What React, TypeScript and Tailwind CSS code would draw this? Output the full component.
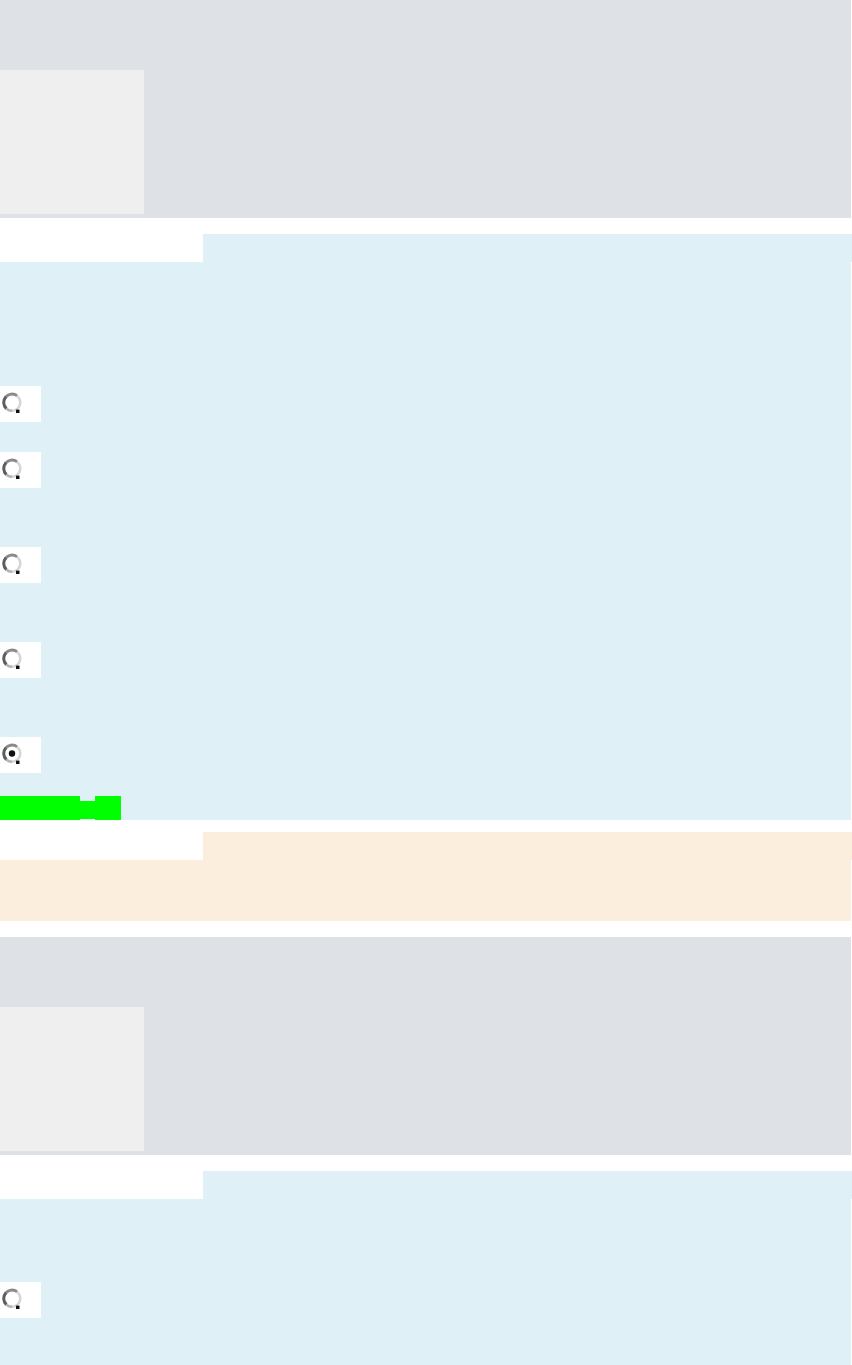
import React from "react";

function Radio({ checked = false }: { checked?: boolean }) {
  return (
    <div className="h-[36px] w-[41px] bg-white pl-[2px] pt-[6px]">
      <svg width="20" height="21" viewBox="0 0 20 21">
        <circle cx="10" cy="10.5" r="8.3" fill="#fff" stroke="#d6d6d6" strokeWidth="2.6" />
        <path d="M15 3.6 A8.3 8.3 0 0 0 3.4 5.4" fill="none" stroke="#8a8a8a" strokeWidth="2.8" />
        <path d="M4 4.8 A8.3 8.3 0 0 0 4.4 16.6" fill="none" stroke="#5e5e5e" strokeWidth="3" />
        <path d="M4.4 16.6 A8.3 8.3 0 0 0 10 18.8" fill="none" stroke="#b4b4b4" strokeWidth="2.6" />
        <rect x="14" y="17.6" width="3.5" height="3.4" fill="#111" />
        {checked && <circle cx="10" cy="10.5" r="3.2" fill="#111" />}
      </svg>
    </div>
  );
}

function TopBlock() {
  return (
    <div className="h-[218px] w-[851px] bg-[#dee1e6] pt-[70px]">
      <div className="h-[144px] w-[144px] bg-[#efefef]" />
    </div>
  );
}

function LabelRow({ fill }: { fill: string }) {
  return (
    <div className="flex h-[28px] w-[852px]">
      <div className="h-full w-[203px] bg-white" />
      <div className={`h-full flex-1 ${fill}`} />
    </div>
  );
}

export default function App() {
  return (
    <div className="flex min-h-[1365px] w-[852px] flex-col overflow-hidden bg-white font-['Liberation_Sans',sans-serif]">
      <TopBlock />

      <section className="mt-[16px] w-[851px] bg-[#dff0f7]">
        <LabelRow fill="bg-[#dff0f7]" />
        <div className="flex flex-col">
          <div className="mt-[124px]">
            <Radio />
          </div>
          <div className="mt-[30px]">
            <Radio />
          </div>
          <div className="mt-[59px]">
            <Radio />
          </div>
          <div className="mt-[59px]">
            <Radio />
          </div>
          <div className="mt-[59px]">
            <Radio checked />
          </div>
          <div className="mt-[23px] flex h-[24px] items-start">
            <div className="h-[24px] w-[80px] bg-[#00ff00]" />
            <div className="mt-[5px] h-[18px] w-[15px] bg-[#00ff00]" />
            <div className="h-[24px] w-[26px] bg-[#00ff00]" />
          </div>
        </div>
      </section>

      <section className="mt-[12px] h-[89px] w-[851px] bg-[#fbeedc]">
        <LabelRow fill="bg-[#fbeedc]" />
      </section>

      <div className="mt-[16px]">
        <TopBlock />
      </div>

      <section className="mt-[16px] h-[220px] w-[851px] bg-[#dff0f7]">
        <LabelRow fill="bg-[#dff0f7]" />
        <div className="mt-[83px]">
          <Radio />
        </div>
      </section>
    </div>
  );
}
